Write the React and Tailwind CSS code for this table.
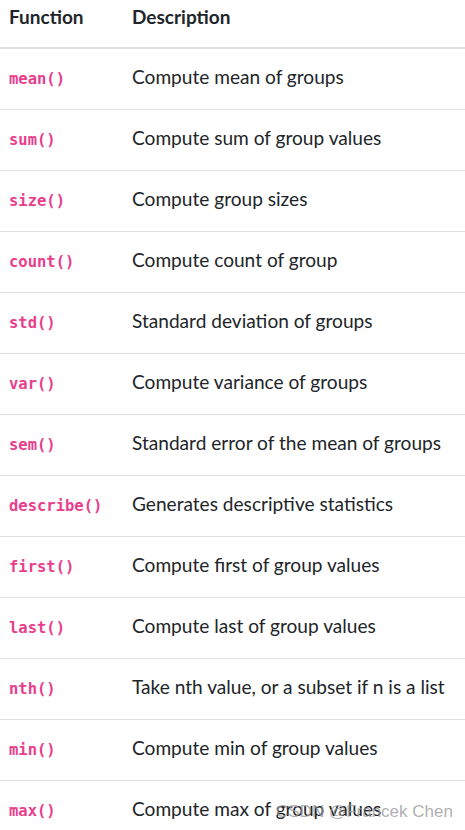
import React from 'react';

const rows = [
  ['mean()', 'Compute mean of groups'],
  ['sum()', 'Compute sum of group values'],
  ['size()', 'Compute group sizes'],
  ['count()', 'Compute count of group'],
  ['std()', 'Standard deviation of groups'],
  ['var()', 'Compute variance of groups'],
  ['sem()', 'Standard error of the mean of groups'],
  ['describe()', 'Generates descriptive statistics'],
  ['first()', 'Compute first of group values'],
  ['last()', 'Compute last of group values'],
  ['nth()', 'Take nth value, or a subset if n is a list'],
  ['min()', 'Compute min of group values'],
  ['max()', 'Compute max of group values'],
];

export default function App() {
  return (
    <div className="relative w-[465px] h-[830px] overflow-hidden bg-white text-[#212529] font-['Lato',sans-serif]">
      <table className="w-full table-fixed border-collapse">
        <thead>
          <tr className="h-[48px] border-b-2 border-[#dee2e6]">
            <th className="w-[132px] pl-[9px] text-left align-top pt-[3px] text-[19px] font-bold">Function</th>
            <th className="text-left align-top pt-[3px] text-[19px] font-bold">Description</th>
          </tr>
        </thead>
        <tbody>
          {rows.map(([fn, desc]) => (
            <tr key={fn} className="h-[61px] border-b border-[#dee2e6]">
              <td className="pl-[9px] align-middle">
                <code className="font-['DejaVu_Sans_Mono',monospace] font-bold text-[15.5px] text-[#e83e8c]">{fn}</code>
              </td>
              <td className="align-middle text-[19.1px] pb-[2px] whitespace-nowrap">{desc}</td>
            </tr>
          ))}
        </tbody>
      </table>
      <div className="absolute left-[276px] bottom-[6px] text-[17px] text-[#999]/80 font-['Liberation_Sans',sans-serif]">CSDN @Francek Chen</div>
    </div>
  );
}
